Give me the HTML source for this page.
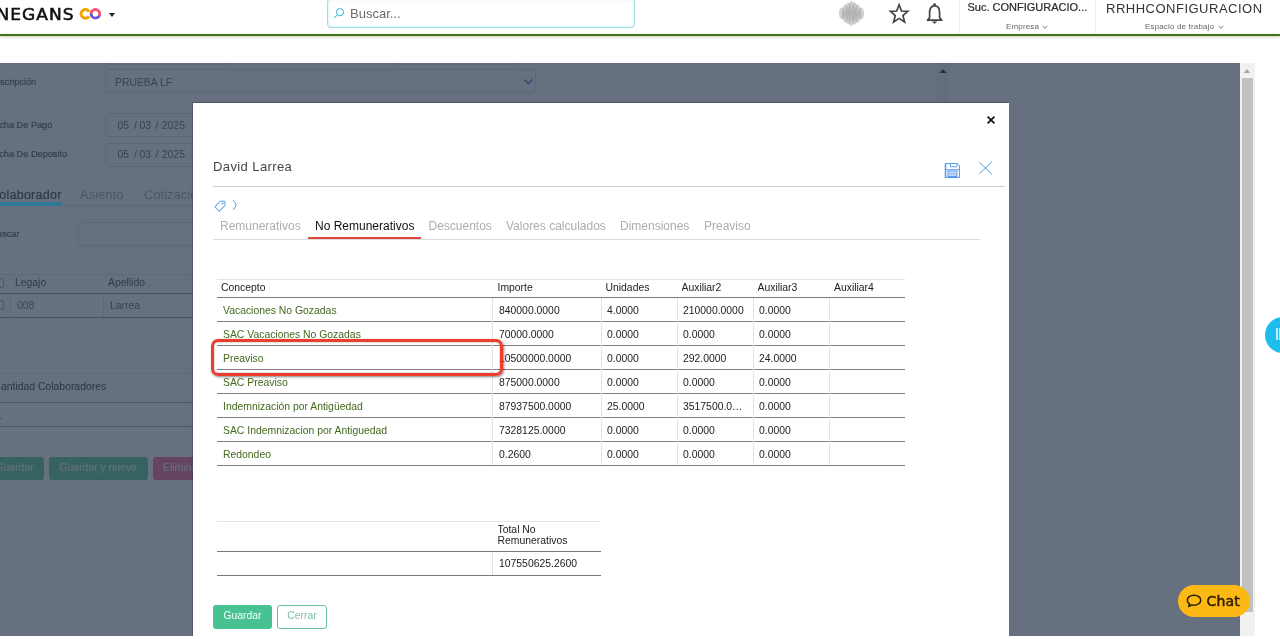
<!DOCTYPE html>
<html lang="es">
<head>
<meta charset="utf-8">
<title>Finnegans GO</title>
<style>
html,body{margin:0;padding:0;overflow:hidden;}
body{width:1280px;height:639px;overflow:hidden;position:relative;background:#fff;font-family:"Liberation Sans",Arial,sans-serif;font-size:11px;color:#222;}
*{box-sizing:border-box;}
.abs{position:absolute;}
.mont{font-family:"DejaVu Sans","Liberation Sans",sans-serif;}
/* ---------- header ---------- */
#hdr{position:absolute;left:0;top:0;width:1280px;height:34px;background:#fff;}
#hline{position:absolute;left:0;top:34px;width:1280px;height:2px;background:#47701f;box-shadow:0 1px 3px rgba(71,112,31,.4);}
.t{position:absolute;white-space:nowrap;line-height:1;transform-origin:0 0;}
/* ---------- background page (dimmed) ---------- */
#bg{position:absolute;left:0;top:63px;width:1240px;height:573px;background:#fff;overflow:hidden;}
#dim{position:absolute;left:0;top:63px;width:1240px;height:573px;background:rgba(52,64,84,.75);}
.inp{position:absolute;border:1px solid #d5d9de;border-radius:3px;background:#fff;}
.sm{font-size:9.2px !important;-webkit-text-stroke:.2px #333;}
.lbl{position:absolute;white-space:nowrap;line-height:1;color:#333;font-size:11px;}
/* ---------- modal ---------- */
#modal{position:absolute;left:193px;top:103px;width:816px;height:533px;background:#fff;box-shadow:-1px -1px 1px rgba(30,40,60,.3);}
table{border-collapse:collapse;}
.tabs span{position:absolute;top:0;white-space:nowrap;line-height:1;font-size:12px;color:#adadad;}
.row{position:absolute;left:0;height:24px;width:688px;border-bottom:1px solid #808080;}
.cell{position:absolute;top:0;height:23px;line-height:25px;white-space:nowrap;font-size:10.4px;color:#222;overflow:hidden;}
.vd{position:absolute;width:1px;background:#e2e2e2;}
</style>
</head>
<body>
<div id="root" style="position:absolute;left:0;top:0;width:1280px;height:639px;overflow:hidden;will-change:transform;">

<!-- ================= HEADER ================= -->
<div id="hdr">
  <div class="t mont" id="logo" style="left:0;top:7.5px;font-size:15.5px;letter-spacing:.9px;color:#111;-webkit-text-stroke:.55px #111;transform:scaleX(1.1);transform-origin:0 0;margin-left:-34px;">FINNEGANS</div>
  <svg class="abs" style="left:79px;top:7px" width="24" height="14" viewBox="0 0 24 14">
    <defs><linearGradient id="lg" x1="0.2" y1="0" x2="0" y2="1"><stop offset="0" stop-color="#ff4f7d"/><stop offset=".42" stop-color="#ee5060"/><stop offset=".6" stop-color="#5a50d8"/><stop offset="1" stop-color="#7a50e0"/></linearGradient></defs>
    <path d="M10.1 4.6 A4.35 4.35 0 1 0 10.1 9.2" fill="none" stroke="#f4a300" stroke-width="3"/>
    <circle cx="16.4" cy="6.8" r="4.3" fill="none" stroke="url(#lg)" stroke-width="2.8"/>
  </svg>
  <div class="abs" style="left:109px;top:13px;width:0;height:0;border-left:3.5px solid transparent;border-right:3.5px solid transparent;border-top:4px solid #222;"></div>

  <div class="abs" style="left:327px;top:-2px;width:308px;height:30px;border:1px solid #a6dbe5;border-radius:4px;box-shadow:inset 0 0 3px rgba(110,225,235,.55);"></div>
  <svg class="abs" style="left:333px;top:7px" width="12" height="12" viewBox="0 0 12 12"><circle cx="7" cy="5.2" r="3.4" fill="none" stroke="#45c0da" stroke-width="1.1"/><path d="M4.5 7.7 L1.2 10.8" stroke="#45c0da" stroke-width="1.1" fill="none"/></svg>
  <div class="t" id="buscar" style="left:350px;top:7px;font-size:13px;color:#6b6b6b;">Buscar...</div>

  <svg class="abs" style="left:838px;top:0px" width="28" height="28" viewBox="0 0 28 28">
    <g fill="#8e8e8e" fill-opacity=".42">
      <ellipse cx="4" cy="13.5" rx="3" ry="6"/><ellipse cx="7.3" cy="13.5" rx="3.2" ry="9.3"/><ellipse cx="10.4" cy="13.5" rx="3.2" ry="11.3"/>
      <ellipse cx="13.5" cy="13.5" rx="3.4" ry="12.5"/><ellipse cx="16.6" cy="13.5" rx="3.2" ry="11.3"/><ellipse cx="19.7" cy="13.5" rx="3.2" ry="9.3"/><ellipse cx="23" cy="13.5" rx="3" ry="6"/>
    </g>
  </svg>
  <svg class="abs" style="left:887px;top:1px" width="24" height="24" viewBox="0 0 24 24"><path d="M12.1 3.8 L14.5 10 L20.8 10.3 L15.9 14.5 L17.6 21 L12.1 17.4 L6.6 21 L8.3 14.5 L3.4 10.3 L9.7 10 Z" fill="none" stroke="#444" stroke-width="1.7" stroke-linejoin="miter"/></svg>
  <svg class="abs" style="left:924px;top:2px" width="22" height="24" viewBox="0 0 22 24"><path d="M10.6 3.9 C6.6 3.9 5.6 7.2 5.6 10.5 V15.6 L3.4 18.2 H17.8 L15.6 15.6 V10.5 C15.6 7.2 14.6 3.9 10.6 3.9 Z" fill="none" stroke="#444" stroke-width="1.7" stroke-linejoin="round"/><path d="M8.6 19.8 H12.6 L10.6 21.6 Z" fill="#444" stroke="#444" stroke-width=".6"/><circle cx="10.6" cy="2.6" r="1.4" fill="#444"/></svg>

  <div class="abs" style="left:959px;top:0;width:1px;height:34px;background:#f0f0f0;"></div>
  <div class="abs" style="left:1095px;top:0;width:1px;height:34px;background:#f0f0f0;"></div>
  <div class="t" id="suc" style="left:967.5px;top:2px;font-size:11px;color:#2b2b33;-webkit-text-stroke:.22px #2b2b33;">Suc. CONFIGURACIO...</div>
  <div class="t" id="emp" style="left:1006px;top:23px;font-size:8px;letter-spacing:.15px;color:#666;">Empresa</div>
  <svg class="abs" style="left:1042px;top:25px" width="6" height="5" viewBox="0 0 6 5"><path d="M0.7 0.8 L3 3.4 L5.3 0.8" fill="none" stroke="#777" stroke-width="1"/></svg>
  <div class="t" id="rrhh" style="left:1106px;top:2px;font-size:13px;letter-spacing:.5px;color:#333;">RRHHCONFIGURACION</div>
  <div class="t" id="esp" style="left:1145px;top:23px;font-size:8px;letter-spacing:.16px;color:#666;">Espacio de trabajo</div>
  <svg class="abs" style="left:1218px;top:25px" width="6" height="5" viewBox="0 0 6 5"><path d="M0.7 0.8 L3 3.4 L5.3 0.8" fill="none" stroke="#777" stroke-width="1"/></svg>
</div>
<div id="hline"></div>

<!-- ================= BACKGROUND PAGE ================= -->
<div id="bg">
  <!-- previous row input bottoms -->
  <div class="inp" style="left:105px;top:-20px;width:121px;height:22px;"></div>
  <div class="inp" style="left:392px;top:-20px;width:122px;height:22px;"></div>
  <!-- inner scrollbar -->
  <div class="abs" style="left:936px;top:0;width:13px;height:60px;background:#f4f4f4;"></div>
  <div class="abs" style="left:939px;top:6px;width:0;height:0;border-left:4px solid transparent;border-right:4px solid transparent;border-bottom:4.5px solid #111;"></div>

  <div class="lbl sm" style="left:-11.8px;top:14.5px;">Descripción</div>
  <div class="inp" style="left:105px;top:6px;width:431px;height:24px;"></div>
  <div class="lbl" style="left:115px;top:14.5px;font-size:10.4px;color:#444;">PRUEBA LF</div>
  <svg class="abs" style="left:523px;top:15px" width="11" height="8" viewBox="0 0 11 8"><path d="M1.5 1.5 L5.5 5.5 L9.5 1.5" fill="none" stroke="#2f6fd0" stroke-width="1.6"/></svg>

  <div class="lbl sm" style="left:-11.5px;top:58px;">Fecha De Pago</div>
  <div class="inp" style="left:105px;top:50px;width:200px;height:24px;"></div>
  <div class="lbl" style="left:117.5px;top:58px;font-size:10.4px;color:#444;width:80px;height:12px;"><span class="abs" style="left:0">05</span><span class="abs" style="left:16.5px">/</span><span class="abs" style="left:22px">03</span><span class="abs" style="left:38px">/</span><span class="abs" style="left:44.3px">2025</span></div>

  <div class="lbl sm" style="left:-11.5px;top:87px;">Fecha De Deposito</div>
  <div class="inp" style="left:105px;top:80px;width:200px;height:24px;"></div>
  <div class="lbl" style="left:117.5px;top:87px;font-size:10.4px;color:#444;width:80px;height:12px;"><span class="abs" style="left:0">05</span><span class="abs" style="left:16.5px">/</span><span class="abs" style="left:22px">03</span><span class="abs" style="left:38px">/</span><span class="abs" style="left:44.3px">2025</span></div>

  <!-- tabs -->
  <div class="abs" style="left:0;top:142px;width:940px;height:1px;background:#dcdcdc;"></div>
  
  <div class="lbl" id="colab" style="left:-10px;top:125.5px;font-size:12.5px;letter-spacing:.25px;color:#222;-webkit-text-stroke:.2px #222;">Colaborador</div>
  <div class="lbl" style="left:80px;top:125px;font-size:13px;color:#999;">Asiento</div>
  <div class="lbl" style="left:144px;top:125px;font-size:13px;color:#999;">Cotización</div>

  <div class="lbl sm" id="busc2" style="right:1220.5px;top:167px;">Buscar</div>
  <div class="inp" style="left:78px;top:159px;width:300px;height:24px;"></div>

  <!-- list table -->
  <div class="abs" style="left:0;top:211px;width:940px;height:1px;background:#e3e3e3;"></div>
  <div class="abs" style="left:0;top:230px;width:940px;height:1px;background:#8c8c8c;"></div>
  <div class="abs" style="left:0;top:254px;width:940px;height:1px;background:#8c8c8c;"></div>
  <div class="abs" style="left:10px;top:231px;width:1px;height:23px;background:#e0e0e0;"></div>
  <div class="abs" style="left:103px;top:231px;width:1px;height:23px;background:#e0e0e0;"></div>
  <div class="abs" style="left:-6px;top:215px;width:10px;height:10px;border:1px solid #999;border-radius:2px;"></div>
  <div class="abs" style="left:-6px;top:237px;width:10px;height:10px;border:1px solid #999;border-radius:2px;"></div>
  <div class="lbl" style="left:15px;top:214.5px;font-size:10.4px;color:#222;">Legajo</div>
  <div class="lbl" style="left:108px;top:214.5px;font-size:10.4px;color:#222;">Apellido</div>
  <div class="lbl" style="left:17px;top:237.5px;font-size:10.4px;color:#44681f;">008</div>
  <div class="lbl" style="left:110px;top:237.5px;font-size:10.4px;color:#444;">Larrea</div>

  <div class="abs" style="left:0;top:310px;width:940px;height:1px;background:#e3e3e3;"></div>
  <div class="abs" style="left:0;top:339px;width:940px;height:1px;background:#9a9a9a;"></div>
  <div class="abs" style="left:0;top:363px;width:940px;height:1px;background:#9a9a9a;"></div>
  <div class="lbl" style="left:-6.5px;top:319px;font-size:10.4px;color:#080808;">Cantidad Colaboradores</div>
  <div class="lbl" style="left:-4px;top:348px;font-size:10.4px;color:#222;">1</div>

  <div class="abs" style="left:-20px;top:394px;width:64px;height:23px;border-radius:3px;background:#3fcc8c;"></div>
  <div class="lbl" style="left:-4.5px;top:400px;font-size:10.4px;color:#fff;">Guardar</div>
  <div class="abs" style="left:49px;top:394px;width:99px;height:23px;border-radius:3px;background:#3fcc8c;"></div>
  <div class="lbl" style="left:59.5px;top:400px;font-size:10.4px;color:#fff;">Guardar y nuevo</div>
  <div class="abs" style="left:153px;top:394px;width:62px;height:23px;border-radius:3px;background:#f7508a;"></div>
  <div class="lbl" style="left:163px;top:400px;font-size:10.4px;color:#fff;">Eliminar</div>
</div>
<div id="dim"></div>
<div class="abs" style="left:0;top:202px;width:62px;height:4px;background:#2c7a96;"></div>

<!-- ================= MODAL ================= -->
<div id="modal">
  <svg class="abs" style="left:793px;top:12px" width="10" height="10" viewBox="0 0 10 10"><path d="M1.6 1.6 L8.4 8.4 M8.4 1.6 L1.6 8.4" stroke="#111" stroke-width="1.7" fill="none"/></svg>
  <div class="t" id="title" style="left:20px;top:57px;font-size:13px;letter-spacing:.4px;color:#45454b;">David Larrea</div>
  <svg class="abs" style="left:751px;top:59px" width="17" height="17" viewBox="0 0 17 17">
    <path d="M1.5 1.5 H13 L15.5 3.5 V15.5 H1.5 Z" fill="none" stroke="#5a9cf0" stroke-width="1"/>
    <path d="M1.5 1.5 V15.5" stroke="#5a9cf0" stroke-width="1.6"/>
    <path d="M6.5 1.5 V4.8 H13 V1.5" fill="none" stroke="#5a9cf0" stroke-width="1"/>
    <path d="M2 7.7 H15.5" stroke="#5a9cf0" stroke-width="1"/>
    <rect x="4" y="9" width="9" height="5.5" fill="#dbe9fb" stroke="#5a9cf0" stroke-width="1"/>
    <path d="M4.5 11.2 H12.5 M4.5 12.8 H12.5" stroke="#8ab6f0" stroke-width=".9"/>
  </svg>
  <svg class="abs" style="left:785px;top:58px" width="15" height="14" viewBox="0 0 15 14"><path d="M1.2 1 L13.8 13 M13.8 1 L1.2 13" stroke="#4a9ad8" stroke-width="1" fill="none"/></svg>
  <div class="abs" style="left:20px;top:83px;width:792px;height:1px;background:#cfcfcf;"></div>
  <svg class="abs" style="left:20px;top:96px" width="14" height="14" viewBox="0 0 14 14"><path d="M7.3 2.2 L11.3 2 L12 2.8 L11.8 6.6 L6.3 12.3 L1.9 7.9 Z" fill="none" stroke="#7aa7ea" stroke-width="1.1" stroke-linejoin="round"/><circle cx="9.6" cy="4.4" r=".9" fill="#5a94e6"/></svg>
  <svg class="abs" style="left:39px;top:96px" width="7" height="12" viewBox="0 0 7 12"><path d="M1.2 1.2 Q3.6 4 4.2 6 Q3.6 8 1.2 10.8" fill="none" stroke="#4a96da" stroke-width=".95"/></svg>
  <div class="tabs abs" style="left:0;top:117px;width:816px;height:12px;">
    <span style="left:27px;">Remunerativos</span>
    <span style="left:122px;color:#111;">No Remunerativos</span>
    <span style="left:235.5px;">Descuentos</span>
    <span style="left:313px;">Valores calculados</span>
    <span style="left:427px;">Dimensiones</span>
    <span style="left:511px;">Preaviso</span>
  </div>
  <div class="abs" style="left:20px;top:136px;width:767px;height:1px;background:#dcdcdc;"></div>
  <div class="abs" style="left:115px;top:133.5px;width:113px;height:2.5px;background:#e0483c;"></div>
<div class="abs" id="tbl" style="left:24px;top:176px;width:688px;height:190px;">
  <div class="abs" style="left:0;top:0;width:688px;height:1px;background:#e4e4e4;"></div>
  <div class="abs" style="left:0;top:18px;width:688px;height:1px;background:#787878;"></div>
  <div class="cell hd" style="left:4px;top:0px;height:17px;line-height:17px;">Concepto</div>
  <div class="cell hd" style="left:280.5px;top:0px;height:17px;line-height:17px;">Importe</div>
  <div class="cell hd" style="left:388.5px;top:0px;height:17px;line-height:17px;">Unidades</div>
  <div class="cell hd" style="left:464.5px;top:0px;height:17px;line-height:17px;">Auxiliar2</div>
  <div class="cell hd" style="left:540.5px;top:0px;height:17px;line-height:17px;">Auxiliar3</div>
  <div class="cell hd" style="left:617px;top:0px;height:17px;line-height:17px;">Auxiliar4</div>
  <div class="row" style="top:19px;"><div class="cell" style="left:6px;width:268px;color:#44681f;">Vacaciones No Gozadas</div><div class="cell" style="left:282px;width:104px;">840000.0000</div><div class="cell" style="left:390px;width:70px;">4.0000</div><div class="cell" style="left:466px;width:70px;">210000.0000</div><div class="cell" style="left:542px;width:70px;">0.0000</div></div>
  <div class="row" style="top:43px;"><div class="cell" style="left:6px;width:268px;color:#44681f;">SAC Vacaciones No Gozadas</div><div class="cell" style="left:282px;width:104px;">70000.0000</div><div class="cell" style="left:390px;width:70px;">0.0000</div><div class="cell" style="left:466px;width:70px;">0.0000</div><div class="cell" style="left:542px;width:70px;">0.0000</div></div>
  <div class="row" style="top:67px;"><div class="cell" style="left:6px;width:268px;color:#44681f;">Preaviso</div><div class="cell" style="left:282px;width:104px;">10500000.0000</div><div class="cell" style="left:390px;width:70px;">0.0000</div><div class="cell" style="left:466px;width:70px;">292.0000</div><div class="cell" style="left:542px;width:70px;">24.0000</div></div>
  <div class="row" style="top:91px;"><div class="cell" style="left:6px;width:268px;color:#44681f;">SAC Preaviso</div><div class="cell" style="left:282px;width:104px;">875000.0000</div><div class="cell" style="left:390px;width:70px;">0.0000</div><div class="cell" style="left:466px;width:70px;">0.0000</div><div class="cell" style="left:542px;width:70px;">0.0000</div></div>
  <div class="row" style="top:115px;"><div class="cell" style="left:6px;width:268px;color:#44681f;">Indemnización por Antigüedad</div><div class="cell" style="left:282px;width:104px;">87937500.0000</div><div class="cell" style="left:390px;width:70px;">25.0000</div><div class="cell" style="left:466px;width:70px;">3517500.0…</div><div class="cell" style="left:542px;width:70px;">0.0000</div></div>
  <div class="row" style="top:139px;"><div class="cell" style="left:6px;width:268px;color:#44681f;">SAC Indemnizacion por Antiguedad</div><div class="cell" style="left:282px;width:104px;">7328125.0000</div><div class="cell" style="left:390px;width:70px;">0.0000</div><div class="cell" style="left:466px;width:70px;">0.0000</div><div class="cell" style="left:542px;width:70px;">0.0000</div></div>
  <div class="row" style="top:163px;"><div class="cell" style="left:6px;width:268px;color:#44681f;">Redondeo</div><div class="cell" style="left:282px;width:104px;">0.2600</div><div class="cell" style="left:390px;width:70px;">0.0000</div><div class="cell" style="left:466px;width:70px;">0.0000</div><div class="cell" style="left:542px;width:70px;">0.0000</div></div>
  <div class="vd" style="left:275px;top:19px;height:167px;"></div>
  <div class="vd" style="left:384px;top:19px;height:167px;"></div>
  <div class="vd" style="left:460px;top:19px;height:167px;"></div>
  <div class="vd" style="left:536px;top:19px;height:167px;"></div>
  <div class="vd" style="left:612px;top:19px;height:167px;"></div>
</div>
<div class="abs" style="left:18px;top:236px;width:292px;height:37px;border:3px solid #ec3d2e;border-radius:7px;box-shadow:1px 1px 2.5px rgba(0,0,0,.5),inset 0 0 1.5px rgba(0,0,0,.6);"></div>
<div class="abs" style="left:24px;top:418px;width:384px;height:56px;">
  <div class="abs" style="left:0;top:0;width:384px;height:1px;background:#e4e4e4;"></div>
  <div class="cell" style="left:280.5px;top:3px;height:24px;line-height:11px;white-space:normal;width:80px;">Total No Remunerativos</div>
  <div class="abs" style="left:0;top:30px;width:384px;height:1px;background:#787878;"></div>
  <div class="cell" style="left:282px;top:30px;">107550625.2600</div>
  <div class="abs" style="left:0;top:54px;width:384px;height:1px;background:#787878;"></div>
  <div class="vd" style="left:275px;top:31px;height:23px;"></div>
</div>
<div class="abs" style="left:20px;top:502px;width:59px;height:24px;border-radius:3px;background:#48c293;color:#f2fff9;font-size:10.4px;line-height:22px;text-align:center;">Guardar</div>
<div class="abs" style="left:84px;top:502px;width:50px;height:24px;border-radius:3px;border:1px solid #67c2a0;color:#7cbfa6;font-size:10.4px;line-height:20px;text-align:center;">Cerrar</div>
</div>

<!-- ================= SCROLLBAR / FLOATING ================= -->
<div class="abs" style="left:1240px;top:63px;width:15px;height:573px;background:#f1f1f1;"></div>
<div class="abs" style="left:1243.7px;top:68.7px;width:0;height:0;border-left:3.7px solid transparent;border-right:3.7px solid transparent;border-bottom:4.3px solid #a3a3a3;"></div>
<div class="abs" style="left:1242px;top:78px;width:11px;height:534px;background:#c1c1c1;"></div>

<div class="abs" style="left:1265px;top:317px;width:36px;height:36px;border-radius:18px;background:#1ebdee;"></div>
<div class="abs" style="left:1276px;top:328px;width:1.5px;height:12px;background:#c5ecfa;"></div>
<div class="abs" style="left:1279px;top:328px;width:1px;height:12px;background:#d9f3fc;"></div>

<div class="abs" style="left:1178px;top:585px;width:72px;height:32px;border-radius:16px;background:#fdb913;"></div>
<svg class="abs" style="left:1186px;top:594px" width="16" height="14" viewBox="0 0 16 14"><path d="M8 1.2 C4.2 1.2 1.3 3.4 1.3 6.2 C1.3 7.8 2.2 9.1 3.6 10 L2.6 12.6 L5.8 10.9 C6.5 11.1 7.2 11.2 8 11.2 C11.8 11.2 14.7 9 14.7 6.2 C14.7 3.4 11.8 1.2 8 1.2 Z" fill="none" stroke="#2a1d00" stroke-width="1.5" stroke-linejoin="round"/></svg>
<div class="t mont" id="chat" style="left:1206.5px;top:593.5px;font-size:14px;letter-spacing:.2px;color:#2a1d00;-webkit-text-stroke:.5px #2a1d00;">Chat</div>

</div>
</body>
</html>
